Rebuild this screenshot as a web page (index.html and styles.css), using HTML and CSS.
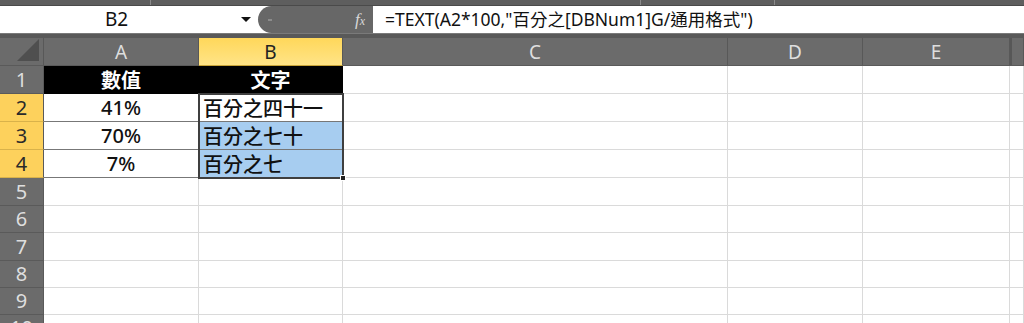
FILE: index.html
```html
<!DOCTYPE html>
<html lang="zh-Hant">
<head>
  <meta charset="UTF-8">
  <title>TEXT 函數</title>
  <link rel="stylesheet" href="styles.css">
</head>
<body>

  <div class="topstrip">
    <span class="sep s1"></span>
    <span class="sep s2"></span>
    <span class="sep s3"></span>
  </div>

  <div class="formulabar">
    <div class="namebox">
      <span class="name">B2</span>
      <span class="arrow"></span>
    </div>
    <div class="pill">
      <span class="dot"></span>
      <span class="fx">f<small>x</small></span>
    </div>
    <div class="formula">=TEXT(A2*100,"百分之[DBNum1]G/通用格式")</div>
  </div>

  <div class="gapstrip"></div>

  <div class="sheet">
    <!-- 欄標題 -->
    <div class="hdr corner"><span class="tri"></span></div>
    <div class="hdr">A</div>
    <div class="hdr on">B</div>
    <div class="hdr">C</div>
    <div class="hdr">D</div>
    <div class="hdr">E</div>
    <div class="hdr last"></div>

    <!-- 第 1 列 -->
    <div class="rh">1</div>
    <div class="c head">數值</div>
    <div class="c head">文字</div>
    <div class="c"></div><div class="c"></div><div class="c"></div><div class="c"></div>

    <!-- 第 2 列 -->
    <div class="rh on">2</div>
    <div class="c num">41%</div>
    <div class="c txt">百分之四十一</div>
    <div class="c"></div><div class="c"></div><div class="c"></div><div class="c"></div>

    <!-- 第 3 列 -->
    <div class="rh on">3</div>
    <div class="c num">70%</div>
    <div class="c txt sel">百分之七十</div>
    <div class="c"></div><div class="c"></div><div class="c"></div><div class="c"></div>

    <!-- 第 4 列 -->
    <div class="rh on">4</div>
    <div class="c num">7%</div>
    <div class="c txt sel">百分之七</div>
    <div class="c"></div><div class="c"></div><div class="c"></div><div class="c"></div>

    <div class="rh">5</div>
    <div class="c"></div><div class="c"></div><div class="c"></div><div class="c"></div><div class="c"></div><div class="c"></div>
    <div class="rh">6</div>
    <div class="c"></div><div class="c"></div><div class="c"></div><div class="c"></div><div class="c"></div><div class="c"></div>
    <div class="rh">7</div>
    <div class="c"></div><div class="c"></div><div class="c"></div><div class="c"></div><div class="c"></div><div class="c"></div>
    <div class="rh">8</div>
    <div class="c"></div><div class="c"></div><div class="c"></div><div class="c"></div><div class="c"></div><div class="c"></div>
    <div class="rh">9</div>
    <div class="c"></div><div class="c"></div><div class="c"></div><div class="c"></div><div class="c"></div><div class="c"></div>
    <div class="rh r10">10</div>
    <div class="c"></div><div class="c"></div><div class="c"></div><div class="c"></div><div class="c"></div><div class="c"></div>

    <!-- 選取範圍 B2:B4 -->
    <div class="selection"><span class="handle"></span></div>
  </div>

</body>
</html>
```

FILE: styles.css
```css
* {
  box-sizing: border-box;
}

body {
  margin: 0;
  width: 1024px;
  height: 323px;
  overflow: hidden;
  background: #ffffff;
  font-family: "Noto Sans", "Noto Sans CJK TC", sans-serif;
  color: #111;
}

/* 上方工具列邊 */
.topstrip {
  height: 6px;
  background: #5e5e5e;
  border-bottom: 1px solid #4a4a4a;
  display: flex;
}

.topstrip .sep {
  width: 1px;
  background: #8a8a8a;
}

.topstrip .s1 { margin-left: 150px; }
.topstrip .s2 { margin-left: 489px; }
.topstrip .s3 { margin-left: 133px; }

/* 公式列 */
.formulabar {
  height: 27px;
  display: flex;
  background: #ffffff;
}

.namebox {
  width: 258px;
  display: flex;
  align-items: center;
}

.name {
  flex: 1;
  text-align: center;
  font-size: 19px;
  padding-left: 10px;
  padding-right: 18px;
  line-height: 27px;
}

.arrow {
  width: 0;
  height: 0;
  border-left: 5px solid transparent;
  border-right: 5px solid transparent;
  border-top: 5px solid #111;
  margin-right: 7px;
}

.pill {
  width: 115px;
  background: #676767;
  border-radius: 14px 0 0 14px;
  display: flex;
  align-items: center;
  justify-content: space-between;
  padding: 0 8px 0 10px;
}

.pill .dot {
  width: 4px;
  height: 2px;
  background: #8c8c8c;
}

.fx {
  font-family: "Liberation Serif", serif;
  font-style: italic;
  font-size: 17px;
  color: #d8d8d8;
  line-height: 1;
}

.fx small {
  font-size: 12px;
}

.formula {
  flex: 1;
  font-size: 17.5px;
  line-height: 27px;
  padding-left: 12px;
  white-space: nowrap;
  color: #111;
}

.gapstrip {
  height: 5px;
  background: #595959;
  border-top: 1px solid #7a7a7a;
}

/* 工作表格 */
.sheet {
  position: relative;
  display: grid;
  grid-template-columns: 44px 155px 144px 385px 135px 147px 1fr;
  grid-template-rows: 28px 28px 28px 28px 28px 28px 27px 28px 27px 27px 28px;
}

.hdr {
  background: #6b6b6b;
  color: #dedede;
  font-size: 19px;
  display: flex;
  align-items: center;
  justify-content: center;
  border-right: 1px solid #585858;
  border-bottom: 1px solid #5a5a5a;
}

.hdr.on {
  background: linear-gradient(#ffd75a, #ffe487);
  color: #222;
  border-bottom-color: #c9a437;
}

.hdr.last {
  border-left: 2px solid #575757;
}

.corner {
  position: relative;
}

.tri {
  position: absolute;
  right: 4px;
  bottom: 4px;
  width: 0;
  height: 0;
  border-left: 22px solid transparent;
  border-bottom: 22px solid #4f4f4f;
}

.rh {
  background: #6b6b6b;
  color: #dedede;
  font-size: 20px;
  display: flex;
  align-items: center;
  justify-content: center;
  border-right: 1px solid #5a5a5a;
  border-bottom: 1px solid #5a5a5a;
  line-height: 1;
}

.rh.on {
  background: #fdd15c;
  color: #2a2a2a;
  border-bottom-color: #d9b24a;
}

.rh.r10 {
  align-items: flex-start;
  padding-top: 3px;
}

.c {
  border-right: 1px solid #dadada;
  border-bottom: 1px solid #dadada;
}

.c.head {
  background: #000;
  color: #fff;
  font-size: 20px;
  font-weight: 700;
  display: flex;
  align-items: center;
  justify-content: center;
  border-color: #000;
}

.c.num {
  font-size: 20px;
  font-weight: 500;
  display: flex;
  align-items: center;
  justify-content: center;
  border-right: 1px solid #777;
  border-bottom: 1px solid #777;
}

.c.txt {
  font-size: 20px;
  font-weight: 500;
  display: flex;
  align-items: center;
  padding-left: 4px;
  border-bottom: 1px solid #777;
}

.c.sel {
  background: #a7cdf0;
}

/* 選取框疊在儲存格上 */
.selection {
  position: absolute;
  left: 198px;
  top: 55px;
  width: 146px;
  height: 86px;
  border: 2px solid #3f3f3f;
  pointer-events: none;
}

.handle {
  position: absolute;
  right: -4px;
  bottom: -4px;
  width: 6px;
  height: 6px;
  background: #222;
  border: 1px solid #fff;
}
```
